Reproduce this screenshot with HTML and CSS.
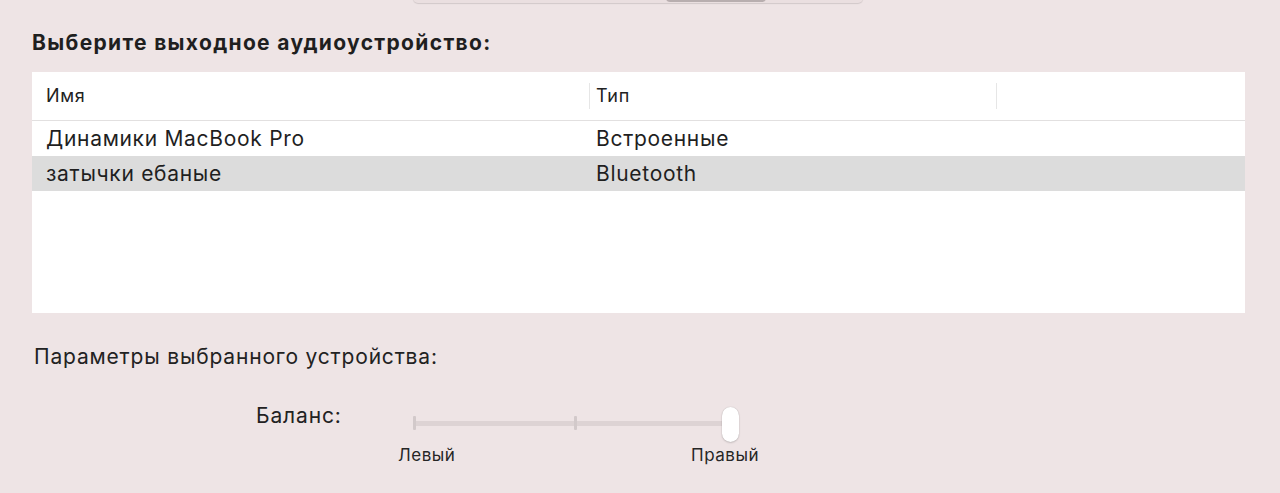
FILE: index.html
```html
<!DOCTYPE html>
<html lang="ru">
<head>
<meta charset="utf-8">
<link rel="stylesheet" href="styles.css">
</head>
<body>
<div class="page">
  <div class="topbar">
    <div class="seg"><div class="seg-sel"></div></div>
  </div>
  <h1 class="title">Выберите выходное аудиоустройство:</h1>
  <div class="table">
    <div class="thead">
      <div class="th c1">Имя</div>
      <div class="th c2">Тип</div>
      <div class="th c3"></div>
    </div>
    <div class="row">
      <div class="td c1">Динамики MacBook Pro</div>
      <div class="td c2">Встроенные</div>
    </div>
    <div class="row sel">
      <div class="td c1">затычки ебаные</div>
      <div class="td c2">Bluetooth</div>
    </div>
  </div>
  <div class="params">Параметры выбранного устройства:</div>
  <div class="balance">
    <div class="bal-label">Баланс:</div>
    <div class="slider">
      <div class="track">
        <span class="tick t0"></span>
        <span class="tick t1"></span>
        <span class="thumb"></span>
      </div>
      <div class="ends">
        <span>Левый</span>
        <span>Правый</span>
      </div>
    </div>
  </div>
</div>
</body>
</html>
```
FILE: styles.css
```css
* { box-sizing: border-box; }
html, body { margin: 0; padding: 0; }
body {
  background: #eee4e5;
  font-family: Inter, "Noto Sans", sans-serif;
  color: #232323;
  width: 1280px;
  height: 493px;
  overflow: hidden;
}
.page { position: relative; height: 493px; }
.topbar { height: 28px; position: relative; }
.seg {
  position: absolute; left: 413px; top: -10px; width: 450px; height: 13px;
  border-radius: 5px; background: #eadfe0;
  box-shadow: 0 1px 1px rgba(0,0,0,0.12);
}
.seg-sel {
  position: absolute; left: 253px; top: 0; width: 100px; height: 12px;
  border-radius: 4px; background: #b8aeaf;
}
.title {
  margin: 0 0 0 32px;
  font-size: 21px; font-weight: 700; line-height: 30px;
  color: #1f1f1f;
  letter-spacing: 1.33px;
}
.table {
  margin: 14px 35px 0 32px;
  height: 241px;
  background: #fff;
}
.thead {
  display: flex; height: 49px;
  border-bottom: 1px solid #e2e0e0;
  align-items: center;
}
.th {
  font-size: 18px; height: 26px; line-height: 26px;
  color: #222;
  letter-spacing: 0.7px;
}
.c1 { width: 557px; padding-left: 14px; }
.c2 { width: 407px; padding-left: 6px; border-left: 1px solid #e6e6e6; }
.c3 { flex: 1; border-left: 1px solid #e6e6e6; }
.row { display: flex; height: 35px; align-items: center; }
.row .td { font-size: 21px; line-height: 35px; color: #1f1f1f; letter-spacing: 0.7px; }
.row .c2 { border-left: none; padding-left: 7px; }
.row.sel { background: #dcdcdc; }
.params {
  margin: 30px 0 0 34px;
  font-size: 21px; line-height: 28px; color: #222;
  letter-spacing: 0.82px;
}
.balance {
  display: flex;
  margin-top: 31px;
  padding-left: 256px;
}
.bal-label {
  font-size: 21px; line-height: 28px; width: 142px; color: #222;
  letter-spacing: 0.85px;
}
.slider { width: 361px; margin-left: 0; }
.track {
  position: relative;
  margin-left: 15px; width: 324px; height: 5px; margin-top: 19px;
  background: #ddd3d4; border-radius: 2px;
}
.tick {
  position: absolute; top: -5px; width: 3px; height: 14px;
  background: #d2c9ca; border-radius: 1px;
}
.t0 { left: 0; }
.t1 { left: 161px; }
.thumb {
  position: absolute; left: 309px; top: -14px; width: 17px; height: 35px;
  background: #fff; border-radius: 9px;
  box-shadow: 0 0 1px rgba(0,0,0,0.25), 0 1px 2px rgba(0,0,0,0.15);
}
.ends {
  display: flex; justify-content: space-between;
  margin-top: 19px;
  font-size: 17px; color: #262626; line-height: 20px;
  letter-spacing: 0.5px;
}
```
